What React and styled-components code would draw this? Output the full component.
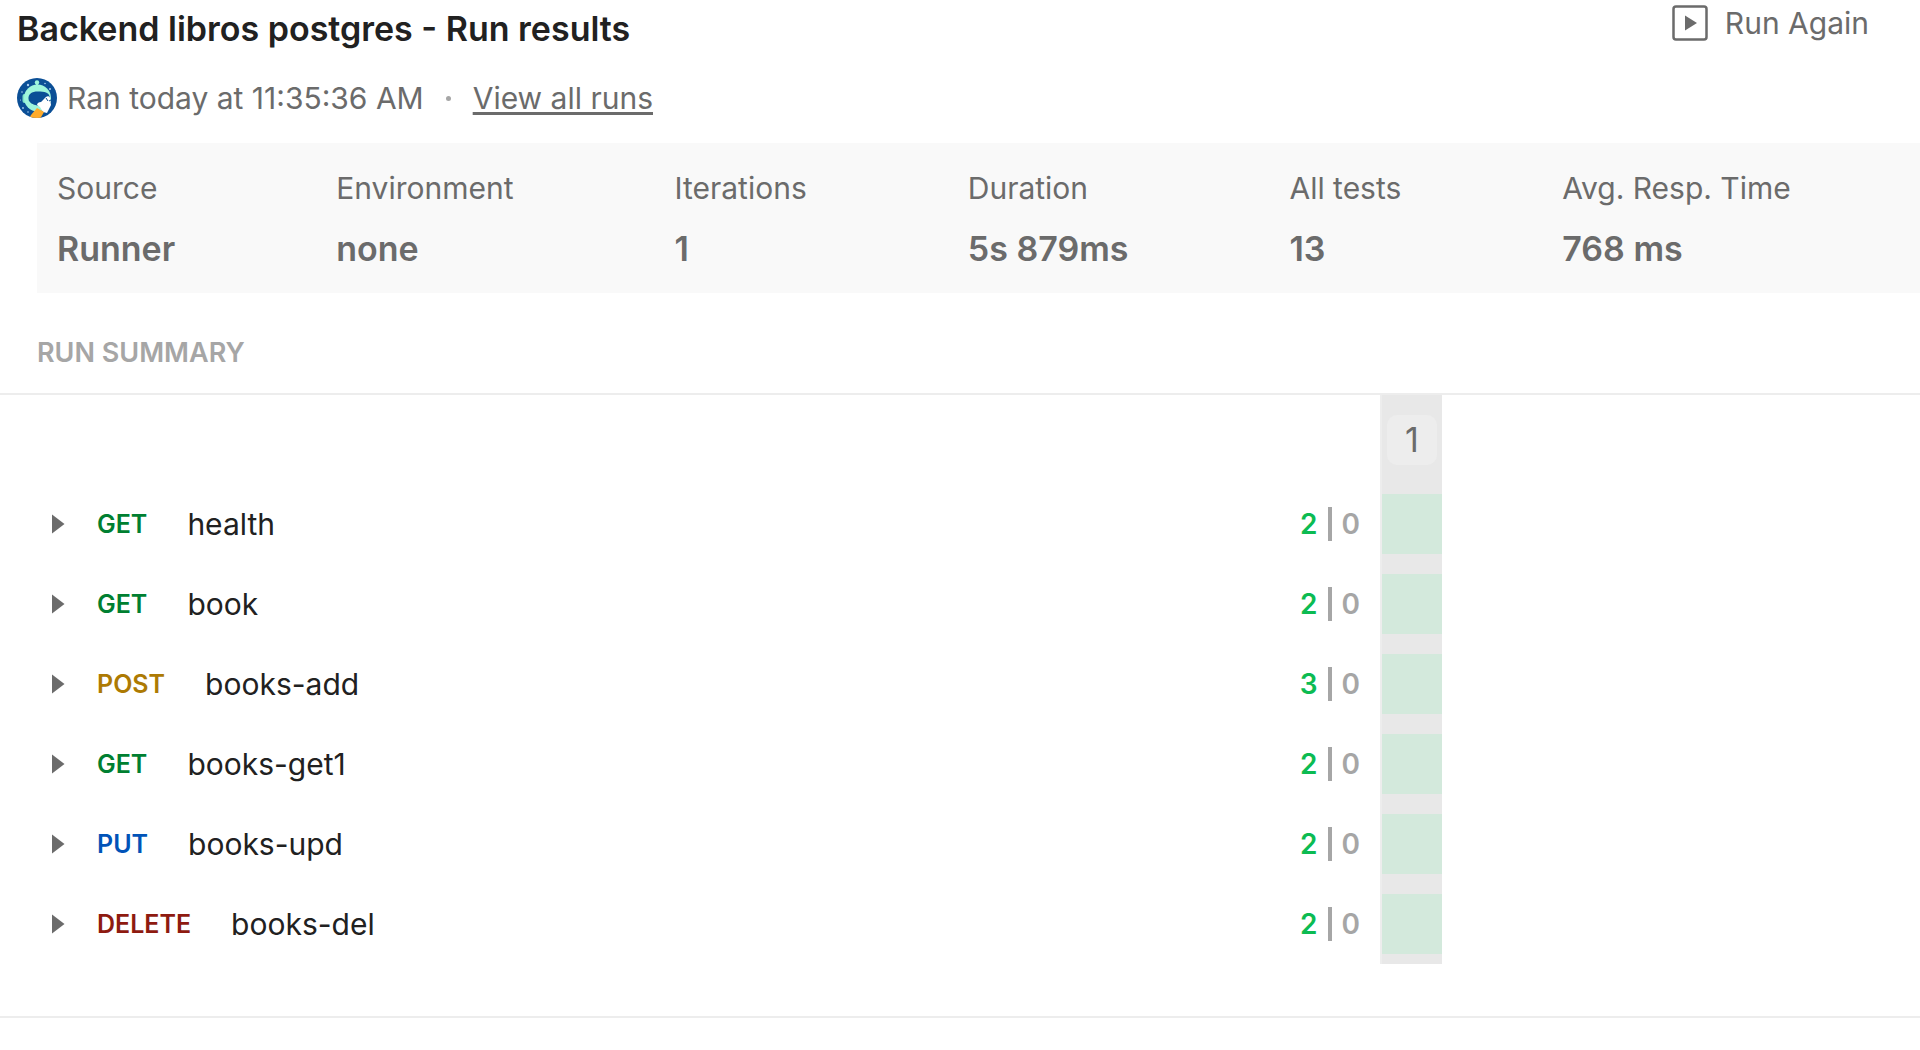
import React from "react";
import styled, { createGlobalStyle } from "styled-components";

const GlobalStyle = createGlobalStyle`
  *, *::before, *::after { box-sizing: border-box; }
  body {
    margin: 0;
    background: #fff;
    color: #212121;
    font-family: Inter, "Liberation Sans", sans-serif;
    font-size: 30px;
    line-height: 40px;
    font-optical-sizing: none;
  }
`;

const Page = styled.div`
  display: flex;
  flex-direction: column;
`;

const Header = styled.header`
  display: flex;
  justify-content: space-between;
  align-items: flex-start;
  padding: 5px 51px 0 17px;
`;

const Heading = styled.div`
  display: flex;
  flex-direction: column;
  gap: 29px;
  padding-top: 4px;
`;

const Title = styled.h1`
  margin: 0;
  font-size: 34px;
  font-weight: 600;
  line-height: 40px;
`;

const Meta = styled.div`
  display: flex;
  align-items: center;
  color: #6b6b6b;
`;

const Avatar = styled.svg`
  width: 40px;
  height: 40px;
  margin-right: 10px;
`;

const Dot = styled.span`
  width: 5px;
  height: 5px;
  margin: 0 22px;
  border-radius: 50%;
  background: #a6a6a6;
`;

const RunsLink = styled.a`
  color: inherit;
  text-decoration: underline;
  text-decoration-thickness: 3px;
  text-underline-offset: 3px;
  text-decoration-skip-ink: none;
`;

const RunAgainButton = styled.button`
  display: flex;
  align-items: center;
  gap: 17px;
  padding: 0;
  border: 0;
  background: none;
  color: #6b6b6b;
  font: inherit;
  line-height: 30px;
  cursor: pointer;
`;

const PlayIcon = styled.svg`
  width: 36px;
  height: 36px;
`;

const Stats = styled.dl`
  display: flex;
  gap: 161px;
  margin: 25px 0 0 37px;
  padding: 25px 20px 24px;
  background: #f9f9f9;
  color: #6b6b6b;
  white-space: nowrap;
`;

const Stat = styled.div`
  display: flex;
  flex-direction: column;
  gap: 21px;
`;

const StatLabel = styled.dt`
  line-height: 40px;
`;

const StatValue = styled.dd`
  margin: 0;
  font-size: 34px;
  font-weight: 600;
  line-height: 40px;
`;

const SectionTitle = styled.h2`
  margin: 0;
  padding: 40px 37px 20px;
  border-bottom: 2px solid #ededed;
  color: #a6a6a6;
  font-size: 27px;
  font-weight: 600;
  line-height: 40px;
`;

const Summary = styled.section`
  padding-bottom: 52px;
  border-bottom: 2px solid #ededed;
`;

const SummaryRow = styled.div`
  display: grid;
  grid-template-columns: minmax(0, 1380fr) 62px minmax(0, 478fr);
  height: ${(p) => (p.$head ? 89 : 80)}px;
`;

const Request = styled.div`
  grid-column: 1;
  display: flex;
  align-items: center;
  padding: 0 20px 0 42px;
`;

const ExpandButton = styled.button`
  display: flex;
  justify-content: center;
  width: 32px;
  margin-right: 23px;
  padding: 5px 0;
  border: 0;
  background: none;
  cursor: pointer;
`;

const Caret = styled.svg`
  width: 13px;
  height: 20px;
`;

const METHOD_COLORS = {
  GET: "#007f31",
  POST: "#ad7a03",
  PUT: "#0053b8",
  DELETE: "#8e1a10",
};

const Method = styled.span`
  margin-right: 40px;
  color: ${(p) => METHOD_COLORS[p.$method]};
  font-size: 25px;
  font-weight: 600;
`;

const RequestName = styled.span`
  flex: 1;
`;

const Tally = styled.span`
  display: flex;
  align-items: center;
  gap: 10px;
  color: #a6a6a6;
  font-size: 28px;
  font-weight: 600;
`;

const Passed = styled.span`
  color: #0cbb52;
`;

const Divider = styled.span`
  width: 4px;
  height: 34px;
  background: #a6a6a6;
`;

const IterationCell = styled.div`
  grid-column: 2;
  display: flex;
  flex-direction: column;
  justify-content: center;
  align-items: stretch;
  border-left: 2px solid #ededed;
  background: #e8e8e8;
`;

const IterationButton = styled.button`
  align-self: center;
  width: 50px;
  height: 50px;
  padding: 0;
  border: 0;
  border-radius: 10px;
  background: #ededed;
  color: #6b6b6b;
  font: inherit;
  font-size: 34px;
  cursor: pointer;
`;

const PassBlock = styled.div`
  height: 60px;
  background: #d3e9dc;
`;

const stats = [
  ["Source", "Runner"],
  ["Environment", "none"],
  ["Iterations", "1"],
  ["Duration", "5s 879ms"],
  ["All tests", "13"],
  ["Avg. Resp. Time", "768 ms"],
];

const requests = [
  { method: "GET", name: "health", passed: 2, failed: 0 },
  { method: "GET", name: "book", passed: 2, failed: 0 },
  { method: "POST", name: "books-add", passed: 3, failed: 0 },
  { method: "GET", name: "books-get1", passed: 2, failed: 0 },
  { method: "PUT", name: "books-upd", passed: 2, failed: 0 },
  { method: "DELETE", name: "books-del", passed: 2, failed: 0 },
];

function AstronautAvatar() {
  return (
    <Avatar viewBox="0 0 40 40" aria-hidden="true">
      <defs>
        <clipPath id="avatar-disc">
          <circle cx="20" cy="20" r="20" />
        </clipPath>
      </defs>
      <g clipPath="url(#avatar-disc)">
        <rect width="40" height="40" fill="#0b4f96" />
        <g fill="#a9cdf0">
          <circle cx="11" cy="7" r="1.200" />
          <circle cx="5" cy="14" r="0.8" />
          <circle cx="28" cy="5.500" r="0.8" />
          <circle cx="33" cy="11" r="1" />
          <circle cx="6" cy="30" r="0.9" />
          <circle cx="11" cy="34" r="0.8" />
          <circle cx="3.500" cy="22" r="0.6" />
        </g>
        <circle cx="20" cy="4.500" r="2.200" fill="#9ff5dc" />
        <rect x="19" y="5" width="2" height="4" fill="#9ff5dc" />
        <rect x="5.500" y="16" width="4" height="9" rx="2" fill="#7fe3cb" />
        <circle cx="20.500" cy="20" r="13.500" fill="#9ff5dc" />
        <path d="M11.500 21c-.5-5 3-7.500 9.500-7.500s11 1 11.500 5c0 3-2 5-4.500 7.500s-4 2.500-8 1.500-8-2.500-8.500-6.500z" fill="#0b4f96" />
        <path d="M27 21c2-3 5-4 6-1l1 7-4 8-4-1-3-5-3-2c0-2 2-3 4-3z" fill="#fff" />
        <path d="M29 20l2 3M32 23l2-1" stroke="#0b4f96" strokeWidth="1" />
        <path d="M20 30l7 4-4 7H12l2-4z" fill="#ffab2b" />
      </g>
    </Avatar>
  );
}

export default function App() {
  return (
    <Page>
      <GlobalStyle />
      <Header>
        <Heading>
          <Title>Backend libros postgres - Run results</Title>
          <Meta>
            <AstronautAvatar />
            <span>Ran today at 11:35:36 AM</span>
            <Dot />
            <RunsLink href="#runs">View all runs</RunsLink>
          </Meta>
        </Heading>
        <RunAgainButton type="button">
          <PlayIcon viewBox="0 0 36 36" aria-hidden="true">
            <rect x="1.500" y="1.500" width="33" height="33" rx="2.500" fill="none" stroke="#6b6b6b" strokeWidth="2.500" />
            <path d="M13 10.500v15l12-7.500z" fill="#6b6b6b" />
          </PlayIcon>
          Run Again
        </RunAgainButton>
      </Header>

      <Stats>
        {stats.map(([label, value]) => (
          <Stat key={label}>
            <StatLabel>{label}</StatLabel>
            <StatValue>{value}</StatValue>
          </Stat>
        ))}
      </Stats>

      <SectionTitle>RUN SUMMARY</SectionTitle>

      <Summary>
        <SummaryRow $head>
          <IterationCell>
            <IterationButton type="button">1</IterationButton>
          </IterationCell>
        </SummaryRow>
        {requests.map((r) => (
          <SummaryRow key={r.name}>
            <Request>
              <ExpandButton type="button" aria-label={`Expand ${r.name}`}>
                <Caret viewBox="0 0 13 20" aria-hidden="true">
                  <path d="M0 0.500v19l12.500-9.500z" fill="#6b6b6b" />
                </Caret>
              </ExpandButton>
              <Method $method={r.method}>{r.method}</Method>
              <RequestName>{r.name}</RequestName>
              <Tally>
                <Passed>{r.passed}</Passed>
                <Divider />
                <span>{r.failed}</span>
              </Tally>
            </Request>
            <IterationCell>
              <PassBlock />
            </IterationCell>
          </SummaryRow>
        ))}
      </Summary>
    </Page>
  );
}
